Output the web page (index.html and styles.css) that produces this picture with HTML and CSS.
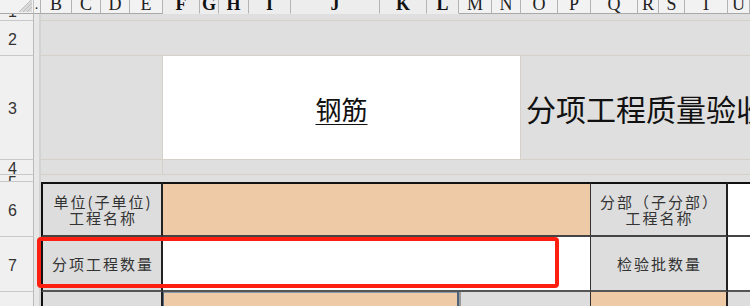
FILE: index.html
```html
<!DOCTYPE html>
<html lang="zh-CN">
<head>
<meta charset="utf-8">
<title>钢筋 分项工程质量验收记录</title>
<link rel="stylesheet" href="styles.css">
</head>
<body>
<div class="sheet">
  <!-- column headers -->
  <div class="corner">
    <svg class="tri" width="15" height="14" viewBox="0 0 15 14">
      <polygon points="1,13 14,13 14,0" fill="#dadada"/>
      <g stroke="#bdbdbd" stroke-width="1">
        <line x1="5" y1="13" x2="14" y2="4"/>
        <line x1="9" y1="13" x2="14" y2="8"/>
        <line x1="1" y1="13" x2="14" y2="0"/>
      </g>
    </svg>
  </div>
  <div class="ch ca-h">.</div>
  <div class="ch">B</div>
  <div class="ch">C</div>
  <div class="ch">D</div>
  <div class="ch">E</div>
  <div class="ch sel">F</div>
  <div class="ch sel">G</div>
  <div class="ch sel">H</div>
  <div class="ch sel">I</div>
  <div class="ch sel">J</div>
  <div class="ch sel">K</div>
  <div class="ch sel">L</div>
  <div class="ch">M</div>
  <div class="ch">N</div>
  <div class="ch">O</div>
  <div class="ch">P</div>
  <div class="ch">Q</div>
  <div class="ch">R</div>
  <div class="ch">S</div>
  <div class="ch">T</div>
  <div class="ch">U</div>

  <!-- row 1 -->
  <div class="rh rh-bottom">1</div>
  <div class="ca"></div>
  <div class="g span20"></div>

  <!-- row 2 -->
  <div class="rh">2</div>
  <div class="ca"></div>
  <div class="g span20"></div>

  <!-- row 3 -->
  <div class="rh">3</div>
  <div class="ca"></div>
  <div class="g span4 vline"></div>
  <div class="white3 span9"><span class="steel">钢筋</span></div>
  <div class="g span7 title">分项工程质量验收记录</div>

  <!-- row 4 -->
  <div class="rh">4</div>
  <div class="ca"></div>
  <div class="g span4 vline"></div>
  <div class="g span16"></div>

  <!-- row 5 -->
  <div class="rh rh-top">5</div>
  <div class="ca"></div>
  <div class="g5 span20"></div>

  <!-- row 6 -->
  <div class="rh">6</div>
  <div class="ca"></div>
  <div class="cell r6 lab first span4">单位(子单位)<br>工程名称</div>
  <div class="cell r6 orange span11 thin"></div>
  <div class="cell r6 lab span4 thick">分部（子分部）<br>工程名称</div>
  <div class="cell r6 white"></div>

  <!-- row 7 -->
  <div class="rh">7</div>
  <div class="ca"></div>
  <div class="cell r7 lab first span4">分项工程数量</div>
  <div class="cell r7 white span11 thin"></div>
  <div class="cell r7 lab span4 thick">检验批数量</div>
  <div class="cell r7 white"></div>

  <!-- row 8 -->
  <div class="rh">8</div>
  <div class="ca"></div>
  <div class="cell lab first span4"></div>
  <div class="cell orange span7 picked"></div>
  <div class="cell lab span4 thin after-picked"></div>
  <div class="cell orange span4 thick"></div>
  <div class="cell lab"></div>

  <div class="mark"></div>
</div>
</body>
</html>
```

FILE: styles.css
```css
* {
  box-sizing: border-box;
  margin: 0;
  padding: 0;
}

html,
body {
  width: 750px;
  height: 306px;
  overflow: hidden;
  background: #dfdfdf;
}

body {
  font-family: "Noto Sans CJK SC", sans-serif;
}

.sheet {
  position: relative;
  width: 750px;
  height: 306px;
  overflow: hidden;
  display: grid;
  grid-template-columns:
    34px 7px 31px 29px 29px 33px 37px 19px 30px 42px 89px
    47px 32px 33px 29px 37px 33px 47px 21px 26px 43px 22px;
  grid-template-rows: 14px 7px 35px 104px 15px 7px 55px 55px 55px;
}

/* spans */
.span4 { grid-column: span 4; }
.span7 { grid-column: span 7; }
.span9 { grid-column: span 9; }
.span11 { grid-column: span 11; }
.span16 { grid-column: span 16; }
.span20 { grid-column: span 20; }

/* column headers */
.corner {
  background: #f2f2f2;
  border-right: 1px solid #c4c4c4;
  border-bottom: 1px solid #a9a9a9;
  display: flex;
  justify-content: flex-end;
  align-items: flex-end;
}

.tri {
  display: block;
}

.ch {
  background: #f2f2f2;
  border-right: 1px solid #b3b3b3;
  border-bottom: 1px solid #a9a9a9;
  font-family: "Liberation Serif", serif;
  font-size: 18px;
  line-height: 8px;
  text-align: center;
  color: #222;
  overflow: hidden;
}

.ch.sel {
  font-weight: bold;
  background: #ededed;
  border-bottom-color: #ededed;
  color: #111;
}

.ch.ca-h {
  font-size: 14px;
  line-height: 9px;
  padding-right: 1px;
}

/* row headers */
.rh {
  background: #f0f0f0;
  border-right: 1px solid #b9b9b9;
  border-bottom: 1px solid #c8c8c8;
  font-family: "Liberation Sans", sans-serif;
  font-size: 16px;
  line-height: 16px;
  color: #333;
  display: flex;
  align-items: center;
  justify-content: center;
  padding-right: 8px;
  padding-top: 3px;
  overflow: hidden;
}

.rh-bottom {
  align-items: flex-end;
  padding-top: 0;
}

.rh-top {
  align-items: flex-start;
  padding-top: 0;
}

/* column A */
.ca {
  background: #e7e7e7;
  border-right: 2px solid #d3d3d3;
}

/* grey sheet area */
.g {
  background: #dfdfdf;
  border-bottom: 1px solid #d6d1c8;
}

.g5 {
  background: #dfdfdf;
}

.vline {
  border-right: 1px solid #d6d1c8;
}

.white3 {
  background: #ffffff;
  border-bottom: 1px solid #d6d1c8;
  border-right: 1px solid #d6d1c8;
  display: flex;
  align-items: center;
  justify-content: center;
  padding-top: 2px;
}

.steel {
  font-size: 26px;
  line-height: 30px;
  color: #111;
  text-decoration: underline;
  text-decoration-thickness: 1px;
  text-underline-offset: 4px;
}

.title {
  display: flex;
  align-items: center;
  padding-left: 5px;
  font-size: 30px;
  line-height: 34px;
  color: #111;
  white-space: nowrap;
  overflow: hidden;
}

/* table */
.cell {
  border-bottom: 2px solid #4a4a4a;
}

.r6 {
  border-top: 2px solid #111;
  border-bottom: 2px solid #444;
}

.r7 {
  border-bottom: 2px solid #555;
}

.lab {
  background: #dddddd;
  color: #333;
  font-size: 15px;
  letter-spacing: 2px;
  line-height: 16px;
  text-align: center;
  display: flex;
  align-items: center;
  justify-content: center;
  padding-left: 2px;
}

.first {
  border-left: 2px solid #111;
  border-right: 2px solid #222;
}

.thin {
  border-right: 1px solid #333;
}

.thick {
  border-right: 2px solid #222;
}

.orange {
  background: #efcaa7;
}

.white {
  background: #ffffff;
}

.picked {
  border-left: 1px solid #5b7089;
  border-right: 2px solid #4f6378;
  border-bottom: none;
  box-shadow: inset 0 1px 0 #8b9aab;
}

.after-picked {
  border-left: 2px solid #9a9a9a;
}

/* red annotation box */
.mark {
  position: absolute;
  left: 37px;
  top: 237px;
  width: 522px;
  height: 51px;
  border: 4px solid #fd1f10;
  border-radius: 4px;
}
```
